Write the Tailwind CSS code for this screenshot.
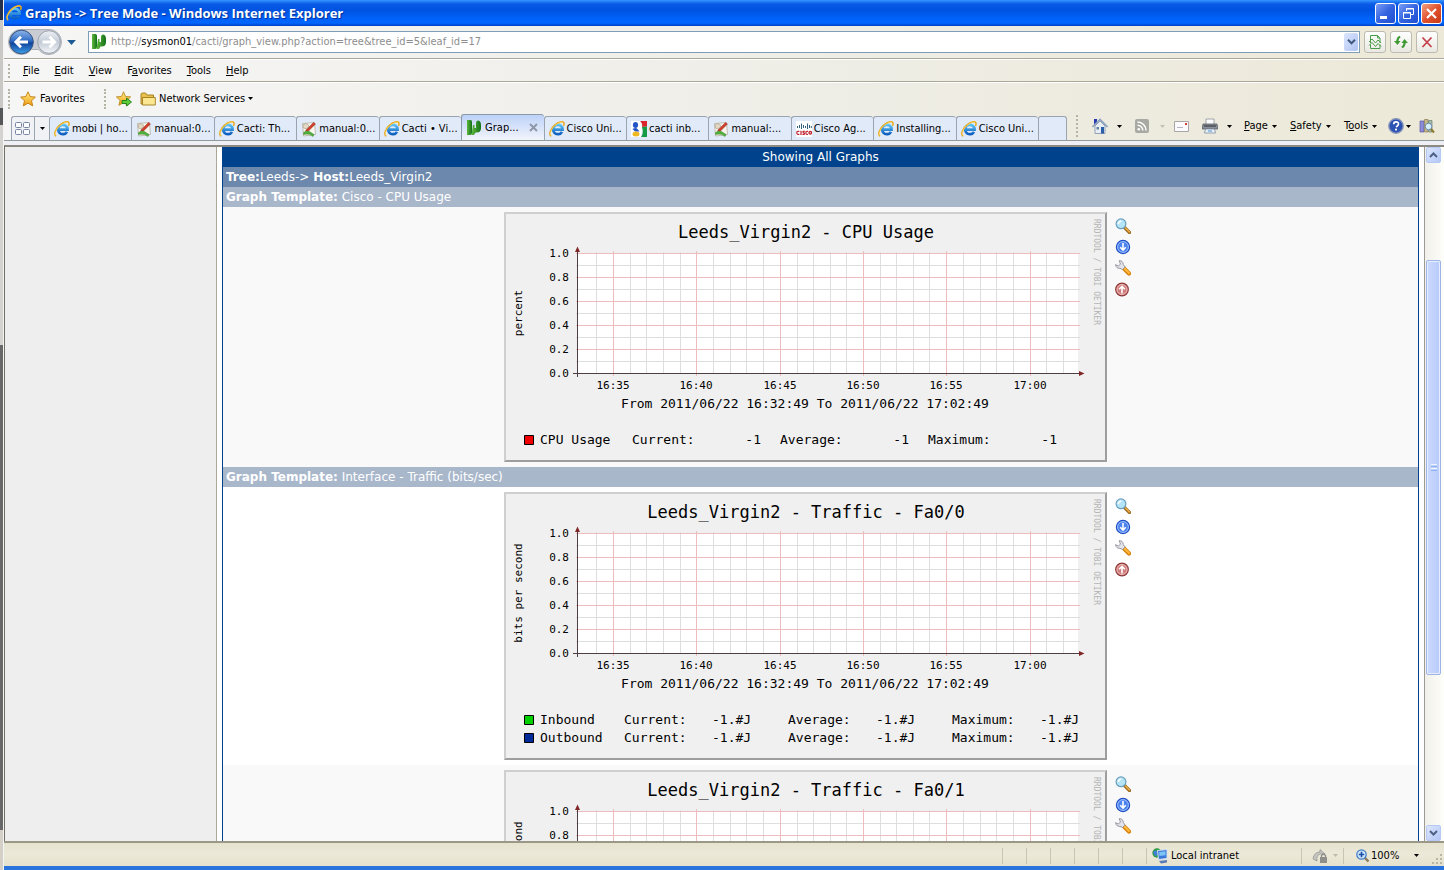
<!DOCTYPE html>
<html lang="en">
<head>
<meta charset="utf-8">
<title>Graphs -&gt; Tree Mode</title>
<script src="https://cdn.jsdelivr.net/npm/@tailwindcss/browser@4"></script>
</head>
<body class="flex h-screen overflow-hidden bg-white font-['DejaVu_Sans_Condensed','Noto_Sans',sans-serif] text-[11px] leading-4 text-black">

<!-- shared icons and plot grid -->
<svg class="absolute size-0" aria-hidden="true">
  <defs>
    <linearGradient id="blueBall" x1="0" y1="0" x2="0" y2="1"><stop offset="0" stop-color="#8fb6ea"/><stop offset=".45" stop-color="#2f6cc4"/><stop offset=".55" stop-color="#0f459c"/><stop offset="1" stop-color="#3fa0ea"/></linearGradient>
    <linearGradient id="greyBall" x1="0" y1="0" x2="0" y2="1"><stop offset="0" stop-color="#eef1f5"/><stop offset=".5" stop-color="#c3cbd6"/><stop offset="1" stop-color="#f4f7fa"/></linearGradient>
    <linearGradient id="ieBlue" x1="0" y1="0" x2="0" y2="1"><stop offset="0" stop-color="#5cc3f5"/><stop offset="1" stop-color="#0f5fc0"/></linearGradient>
    <linearGradient id="gold" x1="0" y1="0" x2="0" y2="1"><stop offset="0" stop-color="#fff08a"/><stop offset="1" stop-color="#f09a10"/></linearGradient>
    <linearGradient id="leaf" x1="0" y1="0" x2="1" y2="0"><stop offset="0" stop-color="#5fb83c"/><stop offset="1" stop-color="#14701a"/></linearGradient>
    <symbol id="ie" viewBox="0 0 16 16">
      <path d="M13 10.800A4.700 4.700 0 1 1 13.600 8.600H5.200" fill="none" stroke="url(#ieBlue)" stroke-width="2.700"/>
      <path d="M2.200 15.200C-.8 13.800 1.600 7.200 6 3.800 9.600.8 13.800-.2 14.800 1.600c.5 1 .2 2.200-.3 3.200" fill="none" stroke="#e9a91c" stroke-width="1.500"/>
      <path d="M2 14.600C.4 12.600 2.400 7.600 6 4.400 9 1.800 12.400.6 14 1.300" fill="none" stroke="#fbe07a" stroke-width=".6"/>
    </symbol>
    <symbol id="cactus" viewBox="0 0 16 16">
      <path d="M1 0h3.500Q6 0 6 2v11q0 2-2 2H1z" fill="url(#leaf)"/>
      <path d="M7 5h1.500v3H10V3.500Q10 .5 12.300.5 15 1 15 5v3q0 4.500-4.500 4.500H9.500L8 15H5.500z" fill="url(#leaf)"/>
    </symbol>
    <symbol id="manual" viewBox="0 0 16 16">
      <path d="M1.500 2.500l12-1 1 12-12 1.500z" fill="#f7f5ee" stroke="#b5b1a2" stroke-width=".8"/>
      <path d="M2 4q2-2 4.500-1L8 5 5 8 2.500 7z" fill="#e3d8c4" stroke="#a59a88" stroke-width=".6"/>
      <path d="M5 9L12.500 1.500l2 1.500-7 7-3 .3z" fill="#cf3f2c" stroke="#8a2115" stroke-width=".4"/>
      <path d="M2.500 11.500q3-2.500 6-1l4.500 3-1 2q-4-3.500-9.500-2z" fill="#4faf3a" stroke="#2f7d22" stroke-width=".4"/>
    </symbol>
    <symbol id="google" viewBox="0 0 16 16">
      <path d="M9 0h7v5.500l-5 .5q1-3-2-6z" fill="#d8262c"/><path d="M11 6l5-.5V16h-6q3-4 1-10z" fill="#139b45"/>
      <path d="M0 0h9q2 3 2 6t-1 10H0z" fill="#fff"/>
      <ellipse cx="4.500" cy="4" rx="2.600" ry="3" fill="#2457c5"/><path d="M1.500 8q3.500-2 5 0l2 2.500H4z" fill="#2457c5"/><ellipse cx="5" cy="13" rx="3.500" ry="2.500" fill="#efb720"/>
    </symbol>
    <symbol id="cisco" viewBox="0 0 16 16">
      <path fill="#fff" d="M0 0h16v16H0z"/>
      <path d="M1.500 5v2M3.500 4v3M5.500 2.500V8M7.500 4v3M9.500 5v2M11.500 2.500V8M13.500 4v3M15.300 5v2" stroke="#34607c" stroke-width="1"/>
      <g fill="none" stroke="#c22a35" stroke-width="1.300"><path d="M3.400 10.300H1.800q-1 0-1 1.500t1 1.500h1.600M5 9.700V14M8.800 10.300H7.200q-.6 1 .4 1.400 1.200.4.600 1.600H6.400M12 10.300h-1.200q-1 0-1 1.500t1 1.500H12"/><circle cx="14.200" cy="11.800" r="1.300"/></g>
    </symbol>
    <symbol id="star" viewBox="0 0 16 16"><path d="M8 .8l2.200 4.800 5.200.5-3.900 3.600 1.200 5.200L8 12.200l-4.700 2.700 1.200-5.200L.6 6.100l5.200-.5z" fill="url(#gold)" stroke="#c27a10" stroke-width=".9"/></symbol>
    <symbol id="staradd" viewBox="0 0 16 16"><path d="M7.500.8l2 4.600 5.200.5-3.900 3.400 1.200 5-4.500-2.600-4.600 2.600 1.200-5L.4 5.900l5.200-.5z" fill="url(#gold)" stroke="#b98a20" stroke-width=".9"/><path d="M6 9.500h4.500V7l5 4-5 4v-2.500H6z" fill="#5ccc3c" stroke="#1e7d16" stroke-width=".9"/></symbol>
    <symbol id="folder" viewBox="0 0 16 16"><path d="M1 13V3.500Q1 2 2.500 2h3L7 4h6.500v9z" fill="#e8c04c" stroke="#a07a18" stroke-width=".9"/><path d="M2.500 14V6.500h12.800V14z" fill="#fbe791" stroke="#a07a18" stroke-width=".9"/></symbol>
    <symbol id="down" viewBox="0 0 7 4"><path d="M0 0h7L3.500 4z"/></symbol>
    <symbol id="zoomin" viewBox="0 0 16 16"><path d="M9.500 9.500l5 5" stroke="#9a6a20" stroke-width="3.200" stroke-linecap="round"/><path d="M10.500 10l4 4" stroke="#f3b24a" stroke-width="1.300" stroke-linecap="round"/><circle cx="6" cy="5.800" r="4.900" fill="#b5e4f7" stroke="#6a9fbd" stroke-width="1.200"/><path d="M3.200 6q.3-2.500 3-3" fill="none" stroke="#fff" stroke-width="1.500"/></symbol>
    <symbol id="balldown" viewBox="0 0 16 16"><circle cx="8" cy="8" r="6.600" fill="#4c82ee" stroke="#1f4fc4" stroke-width="1.200"/><circle cx="8" cy="8" r="5.400" fill="none" stroke="#a9c6fb" stroke-width=".9"/><path d="M8 4v7M5.200 8.300L8 11.100l2.800-2.800" fill="none" stroke="#fff" stroke-width="1.600"/></symbol>
    <symbol id="ballup" viewBox="0 0 16 16"><circle cx="7" cy="8.500" r="6.300" fill="#cf7d7d" stroke="#8f3636" stroke-width="1.200"/><circle cx="7" cy="8.500" r="5" fill="none" stroke="#efc4c4" stroke-width=".9"/><path d="M7 12.500v-7M4.100 8.300L7 5.400l2.900 2.900" fill="none" stroke="#fff" stroke-width="1.600"/></symbol>
    <symbol id="wrench" viewBox="0 0 16 16"><path d="M9 8.500l5 5" stroke="#d98410" stroke-width="4.400" stroke-linecap="round"/><path d="M9.500 8.500l4.500 4.500" stroke="#ffb83a" stroke-width="2" stroke-linecap="round"/><path d="M4.200.7Q8 .5 8.300 4.500L10 7 7.500 9.500 5 8.300Q1 8.500.6 4.600L3.200 6l2.300-1.800z" fill="#e4e4ec" stroke="#8d8d99" stroke-width=".9"/></symbol>
    <symbol id="plot" viewBox="0 0 603 250">
      <path fill="#fff" d="M73 41h501v120H73z"/>
      <g fill="none">
        <path stroke="#dedede" d="M92.500 40v122M126.500 40v122M142.500 40v122M159.500 40v122M176.500 40v122M209.500 40v122M226.500 40v122M242.500 40v122M259.500 40v122M293.500 40v122M309.500 40v122M326.500 40v122M342.500 40v122M376.500 40v122M392.500 40v122M409.500 40v122M425.500 40v122M459.500 40v122M476.500 40v122M492.500 40v122M509.500 40v122M542.500 40v122M559.500 40v122M72 53.500h504M72 77.500h504M72 101.500h504M72 125.500h504M72 149.500h504"/>
        <path stroke="#eebcbf" d="M109.500 39v125M192.500 39v125M276.500 39v125M359.500 39v125M442.500 39v125M526.500 39v125M72 41.500h504M72 65.500h504M72 89.500h504M72 113.500h504M72 137.500h504"/>
        <path stroke="#4d3f42" d="M73.500 39v126M69 161.500h507"/>
      </g>
      <path fill="#7f2626" d="M71 40l2.500-5.500L76 40zM575 159l5.500 2.500-5.500 2.500z"/>
      <g class="font-['DejaVu_Sans_Mono',monospace] text-[11px]" text-anchor="end">
        <text x="65" y="45">1.0</text><text x="65" y="69">0.8</text><text x="65" y="93">0.6</text><text x="65" y="117">0.4</text><text x="65" y="141">0.2</text><text x="65" y="165">0.0</text>
      </g>
      <g class="font-['DejaVu_Sans_Mono',monospace] text-[11px]" text-anchor="middle">
        <text x="109" y="177">16:35</text><text x="192" y="177">16:40</text><text x="276" y="177">16:45</text><text x="359" y="177">16:50</text><text x="442" y="177">16:55</text><text x="526" y="177">17:00</text>
      </g>
      <text class="font-['DejaVu_Sans_Mono',monospace] text-[13px]" text-anchor="middle" x="301" y="196">From 2011/06/22 16:32:49 To 2011/06/22 17:02:49</text>
      <text class="font-['DejaVu_Sans_Mono',monospace] text-[8px]" fill="#b4b4b4" transform="translate(590 7) rotate(90)">RRDTOOL / TOBI OETIKER</text>
    </symbol>
  </defs>
</svg>

<!-- sliver of the window behind -->
<div class="flex w-1 shrink-0 flex-col border-r border-[#f4f4f4] bg-[#c9c8c4]">
  <div class="h-5 bg-[#26314c]"></div><div class="h-[88px]"></div><div class="h-[17px] bg-[#55575a]"></div><div class="h-[220px] bg-[#d4d3cf]"></div><div class="flex-1 bg-[#686868]"></div><div class="h-10 bg-[#d4d0c8]"></div>
</div>

<div class="flex min-w-0 flex-1 flex-col">
  <!-- title bar -->
  <header class="flex h-[26px] shrink-0 items-center bg-[linear-gradient(#3c96ff_0px,#2a86fa_1px,#0a5be6_4px,#0053e1_10px,#0062fb_19px,#0066ff_23px,#0040c4_26px)] pl-0.5 pr-0.5">
    <svg class="size-4 shrink-0"><use href="#ie"/></svg>
    <h1 class="ml-[3px] flex-1 truncate font-['Open_Sans',sans-serif] text-[13px] font-bold text-white [text-shadow:1px_1px_1px_#00309a]">Graphs -&gt; Tree Mode - Windows Internet Explorer</h1>
    <div class="flex gap-0.5">
      <button aria-label="Minimize" class="size-[21px] rounded-[3px] border border-white bg-linear-to-br from-[#7a9df5] via-[#3463e0] to-[#1f4fd0]"><svg viewBox="0 0 19 19"><path fill="#fff" d="M4 12h7v3H4z"/></svg></button>
      <button aria-label="Restore" class="size-[21px] rounded-[3px] border border-white bg-linear-to-br from-[#7a9df5] via-[#3463e0] to-[#1f4fd0]"><svg viewBox="0 0 19 19" fill="none" stroke="#fff"><path d="M7.500 7V4.500h7v6H12M7 5h8"/><path d="M4.500 8.500h7v6h-7zM4 9h8"/></svg></button>
      <button aria-label="Close" class="size-[21px] rounded-[3px] border border-white bg-linear-to-br from-[#f0a080] via-[#e0502c] to-[#c83a14]"><svg viewBox="0 0 19 19"><path d="M5 5l9 9M14 5l-9 9" stroke="#fff" stroke-width="2.200"/></svg></button>
    </div>
  </header>

  <div class="shrink-0 bg-linear-to-r from-[#f6f6f6] via-[#efeee8] to-[#ece9d8]">
    <!-- address row -->
    <div class="flex h-[33px] items-center border-b border-[#aca899] pr-1.5">
      <button aria-label="Back and forward" class="ml-1 h-7 w-[54px]"><svg viewBox="0 0 54 28" class="h-7 w-[54px]">
        <path d="M13 1.500h28a12.500 12.500 0 0 1 0 25q-7 0-10-5h-8q-3 5-10 5a12.500 12.500 0 0 1 0-25z" fill="#c9cdd3" stroke="#aeb2b8"/>
        <circle cx="13.500" cy="14" r="11.800" fill="url(#blueBall)" stroke="#35507e"/><path d="M20 14H8.500M13 8.800L7.800 14l5.200 5.200" fill="none" stroke="#fff" stroke-width="2.800"/>
        <circle cx="41" cy="14" r="11.300" fill="url(#greyBall)" stroke="#9aa2ad"/><path d="M34.500 14H46M41.500 8.800l5.200 5.200-5.200 5.200" fill="none" stroke="#fff" stroke-width="2.800"/></svg></button>
      <button aria-label="Recent pages" class="ml-[5px] w-[9px]"><svg class="h-[5px] w-[9px] fill-[#1d5a94]"><use href="#down"/></svg></button>
      <div class="ml-3 flex h-[22px] min-w-0 flex-1 items-center border border-[#7f9db9] bg-white pl-0.5 pr-px">
        <svg class="size-4 shrink-0"><use href="#cactus"/></svg>
        <div class="ml-1 min-w-0 flex-1 truncate text-[#8e8e8e]" role="textbox" aria-label="Address" contenteditable="true">http://<span class="text-black">sysmon01</span>/cacti/graph_view.php?action=tree&amp;tree_id=5&amp;leaf_id=17</div>
        <button aria-label="Show addresses" class="flex h-[18px] w-3.5 items-center justify-center rounded-[2px] bg-linear-to-br from-[#dbe5fd] to-[#afc3f2]"><svg viewBox="0 0 9 6" class="h-1.5 w-[9px]"><path d="M1 .8l3.500 3.500L8 .8" fill="none" stroke="#40587e" stroke-width="2"/></svg></button>
      </div>
      <div class="ml-1 flex gap-1">
        <button aria-label="Compatibility view" class="size-[22px] rounded-[3px] border border-[#bdbab0] bg-linear-to-b from-white to-[#e9e8e2]"><svg viewBox="0 0 20 20" fill="none" stroke="#4a9c4a"><path d="M5.500 11V3.500h7l2.500 2.500v5M12.500 3.500V6H15M5.500 12.500v4H15v-4"/><path d="M4 10l3-3 3.500 4L13 8l3 3M4 13.500l3-3 3.500 4 2.500-3 3 3"/></svg></button>
        <button aria-label="Refresh" class="size-[22px] rounded-[3px] border border-[#bdbab0] bg-linear-to-b from-white to-[#e9e8e2]"><svg viewBox="0 0 20 20" fill="#3f9a35"><path d="M9 4Q6 4 5.200 9H3l3.500 4 3-4H7.500Q7.500 6 9.500 5.500zM11 16q3 0 3.800-5H17l-3.500-4-3 4h2q0 3-2 3.500z"/></svg></button>
        <button aria-label="Stop" class="size-[22px] rounded-[3px] border border-[#bdbab0] bg-linear-to-b from-white to-[#e9e8e2]"><svg viewBox="0 0 20 20"><path d="M5.500 5.500l9 9.500M14.500 5.500l-9 9.500" stroke="#c5424c" stroke-width="1.800"/></svg></button>
      </div>
    </div>
    <!-- menu -->
    <nav class="flex h-[23px] items-center gap-[15px] border-b border-t border-b-[#aca899] border-t-white pl-1">
      <span class="h-3.5 border-l-2 border-dotted border-[#b5b2a6]"></span>
      <button class="-ml-0.5"><u>F</u>ile</button><button><u>E</u>dit</button><button><u>V</u>iew</button><button>F<u>a</u>vorites</button><button><u>T</u>ools</button><button><u>H</u>elp</button>
    </nav>
    <!-- favorites -->
    <div class="flex h-8 items-center border-t border-white pl-1">
      <span class="h-5 border-l-2 border-dotted border-[#b5b2a6]"></span>
      <button class="ml-2.5 flex w-[84px] items-center gap-1"><svg class="size-4"><use href="#star"/></svg>Favorites</button>
      <span class="h-5 border-l-2 border-dotted border-[#b5b2a6]"></span>
      <button aria-label="Add to favorites" class="ml-2.5"><svg class="size-4"><use href="#staradd"/></svg></button>
      <button class="ml-2 flex items-center gap-[3px]"><svg class="size-4"><use href="#folder"/></svg>Network Services<svg class="h-[3px] w-[5px]"><use href="#down"/></svg></button>
    </div>
    <!-- tabs and command bar -->
    <div class="flex h-[27px] items-end border-b border-[#919b9c] pl-[7px]">
      <div class="flex h-6 w-[38px] shrink-0 rounded-tl-[3px] border-l border-t border-[#9aa4b0] bg-[#f0f2f6]">
        <button aria-label="Quick tabs" class="flex w-[23px] items-center justify-center border-r border-[#9aa4b0]"><svg viewBox="0 0 16 15" class="h-[15px] w-4" fill="#fbfcff" stroke="#7883a0"><rect x=".5" y="1.500" width="6" height="5" rx="1"/><rect x="8.500" y="1.500" width="6" height="5" rx="1"/><rect x=".5" y="8.500" width="6" height="5" rx="1"/><rect x="8.500" y="8.500" width="6" height="5" rx="1"/></svg></button>
        <button aria-label="Tab list" class="flex flex-1 items-center justify-center"><svg class="h-[3px] w-[5px]"><use href="#down"/></svg></button>
      </div>
      <div class="flex min-w-0 flex-1 items-end">
        <button class="flex h-6 w-0 min-w-0 grow items-center gap-0.5 rounded-t-[3px] border-l border-t border-[#9aa4b0] bg-[#e1eaf8] pl-1 whitespace-nowrap"><svg class="size-4 shrink-0"><use href="#ie"/></svg>mobi | ho...</button>
        <button class="flex h-6 w-0 min-w-0 grow items-center gap-0.5 rounded-t-[3px] border-l border-t border-[#9aa4b0] bg-[#e1eaf8] pl-1 whitespace-nowrap"><svg class="size-4 shrink-0"><use href="#manual"/></svg>manual:0...</button>
        <button class="flex h-6 w-0 min-w-0 grow items-center gap-0.5 rounded-t-[3px] border-l border-t border-[#9aa4b0] bg-[#e1eaf8] pl-1 whitespace-nowrap"><svg class="size-4 shrink-0"><use href="#ie"/></svg>Cacti: Th...</button>
        <button class="flex h-6 w-0 min-w-0 grow items-center gap-0.5 rounded-t-[3px] border-l border-t border-[#9aa4b0] bg-[#e1eaf8] pl-1 whitespace-nowrap"><svg class="size-4 shrink-0"><use href="#manual"/></svg>manual:0...</button>
        <button class="flex h-6 w-0 min-w-0 grow items-center gap-0.5 rounded-t-[3px] border-l border-t border-[#9aa4b0] bg-[#e1eaf8] pl-1 whitespace-nowrap"><svg class="size-4 shrink-0"><use href="#ie"/></svg>Cacti • Vi...</button>
        <div class="flex h-[26px] w-0 min-w-0 grow items-center gap-0.5 rounded-t-[3px] border-l border-t border-[#8d98a8] bg-linear-to-b from-[#bdd2f8] to-[#f2f4fb] pl-1 whitespace-nowrap"><svg class="size-4 shrink-0"><use href="#cactus"/></svg><button class="ml-px flex-1 text-left">Grap...</button><button aria-label="Close tab" class="mr-1.5"><svg viewBox="0 0 9 9" class="size-[9px]"><path d="M1 1l7 7M8 1L1 8" stroke="#8f98a8" stroke-width="2"/></svg></button></div>
        <button class="flex h-6 w-0 min-w-0 grow items-center gap-0.5 rounded-t-[3px] border-l border-t border-[#9aa4b0] bg-[#e1eaf8] pl-1 whitespace-nowrap"><svg class="size-4 shrink-0"><use href="#ie"/></svg>Cisco Uni...</button>
        <button class="flex h-6 w-0 min-w-0 grow items-center gap-0.5 rounded-t-[3px] border-l border-t border-[#9aa4b0] bg-[#e1eaf8] pl-1 whitespace-nowrap"><svg class="size-4 shrink-0"><use href="#google"/></svg>cacti inb...</button>
        <button class="flex h-6 w-0 min-w-0 grow items-center gap-0.5 rounded-t-[3px] border-l border-t border-[#9aa4b0] bg-[#e1eaf8] pl-1 whitespace-nowrap"><svg class="size-4 shrink-0"><use href="#manual"/></svg>manual:...</button>
        <button class="flex h-6 w-0 min-w-0 grow items-center gap-0.5 rounded-t-[3px] border-l border-t border-[#9aa4b0] bg-[#e1eaf8] pl-1 whitespace-nowrap"><svg class="size-4 shrink-0"><use href="#cisco"/></svg>Cisco Ag...</button>
        <button class="flex h-6 w-0 min-w-0 grow items-center gap-0.5 rounded-t-[3px] border-l border-t border-[#9aa4b0] bg-[#e1eaf8] pl-1 whitespace-nowrap"><svg class="size-4 shrink-0"><use href="#ie"/></svg>Installing...</button>
        <button class="flex h-6 w-0 min-w-0 grow items-center gap-0.5 rounded-t-[3px] border-l border-t border-[#9aa4b0] bg-[#e1eaf8] pl-1 whitespace-nowrap"><svg class="size-4 shrink-0"><use href="#ie"/></svg>Cisco Uni...</button>
        <button aria-label="New tab" class="h-6 w-[29px] shrink-0 rounded-t-[3px] border-x border-t border-[#9aa4b0] bg-[#e1eaf8]"></button>
      </div>
      <div class="mb-0.5 ml-[9px] flex h-6 shrink-0 items-center pr-[9px]">
        <span class="mr-3.5 h-[22px] border-l-2 border-dotted border-[#b5b2a6]"></span>
        <button aria-label="Home" class="flex w-[43px] items-center gap-[9px]"><svg viewBox="0 0 16 16" class="size-4"><path d="M2 1h3v5H2z" fill="#2838b0"/><path d="M3 8l5-5 5 5v7.500H3z" fill="#e8edf4" stroke="#7d8fa8" stroke-width=".8"/><path d="M.5 9L8 1.500 15.500 9" fill="none" stroke="#8ea3bd" stroke-width="1.600"/><path d="M9 9h3v6.500H9z" fill="#2c5ea8"/><path d="M4.500 9h2.500v2.500H4.500z" fill="#68839f"/></svg><svg class="h-[3px] w-[5px]"><use href="#down"/></svg></button>
        <button aria-label="Feeds" class="flex w-[39px] items-center gap-[11px]"><svg viewBox="0 0 14 14" class="size-3.5"><rect width="14" height="14" rx="2" fill="#a9a9a4"/><circle cx="3.800" cy="10.300" r="1.300" fill="#fff"/><path d="M2.500 6.200a5.300 5.300 0 0 1 5.300 5.300M2.500 3a8.500 8.500 0 0 1 8.500 8.500" fill="none" stroke="#fff" stroke-width="1.500"/></svg><svg class="h-[3px] w-[5px] fill-[#c4c1b4]"><use href="#down"/></svg></button>
        <button aria-label="Read mail" class="w-7"><svg viewBox="0 0 15 11" class="h-[11px] w-[15px]"><path d="M.5.5h14v10H.5z" fill="#fbfbfd" stroke="#a9a6a8"/><path d="M3 6.500h6" stroke="#b5b5c4"/><path d="M11 2h2v2h-2z" fill="#d03838"/></svg></button>
        <button aria-label="Print" class="flex w-[42px] items-center gap-[9px]"><svg viewBox="0 0 16 16" class="size-4"><path d="M4 1h8v6H4z" fill="#fdfdfd" stroke="#8a8f98" stroke-width=".8"/><path d="M1 6h14l.8 5H.2z" fill="#8c9098" stroke="#565b64" stroke-width=".8"/><path d="M2 8h12" stroke="#4a4f58" stroke-width="1.500"/><path d="M3.500 11h9l1 4h-11z" fill="#e8f0f8" stroke="#7f8ea0" stroke-width=".8"/><path d="M6 13h4" stroke="#4c93d4"/></svg><svg class="h-[3px] w-[5px]"><use href="#down"/></svg></button>
        <button class="flex w-[46px] items-center gap-1"><span><u>P</u>age</span><svg class="h-[3px] w-[5px]"><use href="#down"/></svg></button>
        <button class="flex w-[54px] items-center gap-1"><span><u>S</u>afety</span><svg class="h-[3px] w-[5px]"><use href="#down"/></svg></button>
        <button class="flex w-11 items-center gap-1"><span>T<u>o</u>ols</span><svg class="h-[3px] w-[5px]"><use href="#down"/></svg></button>
        <button aria-label="Help" class="flex w-[31px] items-center gap-0.5"><svg viewBox="0 0 16 16" class="size-4"><circle cx="8" cy="8" r="7.200" fill="#2c52b4" stroke="#8594b8" stroke-width="1.400"/><path d="M5.700 6.200q0-2.400 2.400-2.400t2.400 2.100Q10.500 7.300 8.100 9" fill="none" stroke="#fff" stroke-width="1.700"/><circle cx="8" cy="11.600" r="1.100" fill="#fff"/></svg><svg class="h-[3px] w-[5px]"><use href="#down"/></svg></button>
        <button aria-label="Research"><svg viewBox="0 0 16 16" class="size-4"><path d="M1 3h4v11H1z" fill="#8b8bd8" stroke="#5a5aa0" stroke-width=".7"/><path d="M5.500 1.500H9V14H5.500z" fill="#c9b98a" stroke="#8a7d55" stroke-width=".7"/><path d="M9.500 2.500H13V14H9.500z" fill="#a5b8a5" stroke="#6d806d" stroke-width=".7"/><circle cx="9.500" cy="8.500" r="3.300" fill="#d8eefa" stroke="#6b8fae"/><path d="M12 11l3 3.500" stroke="#8d7a2e" stroke-width="2"/></svg></button>
      </div>
    </div>
    <div class="h-1 bg-[#eff0f5]"></div>
  </div>

  <!-- page -->
  <main class="flex min-h-0 flex-1 border-l border-t-2 border-l-[#716f64] border-t-[#8c8a80] bg-white">
    <aside class="w-[212px] shrink-0 border-r border-[#aca899] bg-[#eeeeee]"></aside>
    <section class="ml-[5px] mr-[5px] min-w-0 flex-1 overflow-hidden border-x border-[#00438c] font-['DejaVu_Sans',sans-serif] text-[12px] leading-5 text-white">
      <h2 class="h-5 bg-[#00438c] text-center">Showing All Graphs</h2>
      <p class="h-5 bg-[#6d88ad] px-[3px]"><b>Tree:</b>Leeds-&gt; <b>Host:</b>Leeds_Virgin2</p>
      <h3 class="h-5 bg-[#a9b7cb] px-[3px]"><b>Graph Template:</b> Cisco - CPU Usage</h3>
      <article class="flex h-[260px] justify-center gap-2 bg-[#f9f9f9] pt-[5px]">
        <div class="h-[250px] w-[603px] border-2 border-b-[#9e9e9e] border-l-[#cfcfcf] border-r-[#9e9e9e] border-t-[#cfcfcf] bg-[#f0f0f0]">
          <svg viewBox="2 2 599 246" class="h-[246px] w-[599px] font-['DejaVu_Sans_Mono',monospace] text-[13px]" fill="#000">
            <use href="#plot" width="603" height="250"/>
            <text class="text-[17px]" text-anchor="middle" x="302" y="26">Leeds_Virgin2 - CPU Usage</text>
            <text class="text-[11px]" text-anchor="middle" transform="translate(18 101) rotate(-90)">percent</text>
            <path d="M20.500 223.500h9v9h-9z" fill="#f00000" stroke="#000"/>
            <text x="36" y="232">CPU Usage</text><text x="128" y="232">Current:</text><text x="257" y="232" text-anchor="end">-1</text><text x="276" y="232">Average:</text><text x="405" y="232" text-anchor="end">-1</text><text x="424" y="232">Maximum:</text><text x="553" y="232" text-anchor="end">-1</text>
          </svg>
        </div>
        <div class="flex w-[22px] flex-col gap-[5px] pt-1.5">
          <a href="#" aria-label="Zoom graph"><svg class="size-4"><use href="#zoomin"/></svg></a><a href="#" aria-label="CSV export"><svg class="size-4"><use href="#balldown"/></svg></a><a href="#" aria-label="Properties"><svg class="size-4"><use href="#wrench"/></svg></a><a href="#" aria-label="Page top"><svg class="size-4"><use href="#ballup"/></svg></a>
        </div>
      </article>
      <h3 class="h-5 bg-[#a9b7cb] px-[3px]"><b>Graph Template:</b> Interface - Traffic (bits/sec)</h3>
      <article class="flex h-[278px] justify-center gap-2 bg-white pt-[5px]">
        <div class="h-[268px] w-[603px] border-2 border-b-[#9e9e9e] border-l-[#cfcfcf] border-r-[#9e9e9e] border-t-[#cfcfcf] bg-[#f0f0f0]">
          <svg viewBox="2 2 599 264" class="h-[264px] w-[599px] font-['DejaVu_Sans_Mono',monospace] text-[13px]" fill="#000">
            <use href="#plot" width="603" height="250"/>
            <text class="text-[17px]" text-anchor="middle" x="302" y="26">Leeds_Virgin2 - Traffic - Fa0/0</text>
            <text class="text-[11px]" text-anchor="middle" transform="translate(18 101) rotate(-90)">bits per second</text>
            <path d="M20.500 223.500h9v9h-9z" fill="#00cf00" stroke="#000"/>
            <text x="36" y="232">Inbound</text><text x="120" y="232">Current:</text><text x="208" y="232">-1.#J</text><text x="284" y="232">Average:</text><text x="372" y="232">-1.#J</text><text x="448" y="232">Maximum:</text><text x="536" y="232">-1.#J</text>
            <path d="M20.500 241.500h9v9h-9z" fill="#002a97" stroke="#000"/>
            <text x="36" y="250">Outbound</text><text x="120" y="250">Current:</text><text x="208" y="250">-1.#J</text><text x="284" y="250">Average:</text><text x="372" y="250">-1.#J</text><text x="448" y="250">Maximum:</text><text x="536" y="250">-1.#J</text>
          </svg>
        </div>
        <div class="flex w-[22px] flex-col gap-[5px] pt-1.5">
          <a href="#" aria-label="Zoom graph"><svg class="size-4"><use href="#zoomin"/></svg></a><a href="#" aria-label="CSV export"><svg class="size-4"><use href="#balldown"/></svg></a><a href="#" aria-label="Properties"><svg class="size-4"><use href="#wrench"/></svg></a><a href="#" aria-label="Page top"><svg class="size-4"><use href="#ballup"/></svg></a>
        </div>
      </article>
      <article class="flex h-[278px] justify-center gap-2 bg-[#f9f9f9] pt-[5px]">
        <div class="h-[268px] w-[603px] border-2 border-b-[#9e9e9e] border-l-[#cfcfcf] border-r-[#9e9e9e] border-t-[#cfcfcf] bg-[#f0f0f0]">
          <svg viewBox="2 2 599 264" class="h-[264px] w-[599px] font-['DejaVu_Sans_Mono',monospace] text-[13px]" fill="#000">
            <use href="#plot" width="603" height="250"/>
            <text class="text-[17px]" text-anchor="middle" x="302" y="26">Leeds_Virgin2 - Traffic - Fa0/1</text>
            <text class="text-[11px]" text-anchor="middle" transform="translate(18 101) rotate(-90)">bits per second</text>
          </svg>
        </div>
        <div class="flex w-[22px] flex-col gap-[5px] pt-1.5">
          <a href="#" aria-label="Zoom graph"><svg class="size-4"><use href="#zoomin"/></svg></a><a href="#" aria-label="CSV export"><svg class="size-4"><use href="#balldown"/></svg></a><a href="#" aria-label="Properties"><svg class="size-4"><use href="#wrench"/></svg></a>
        </div>
      </article>
    </section>
    <!-- scrollbar -->
    <div class="flex w-5 shrink-0 flex-col items-center border-l border-[#9c9a92] bg-linear-to-r from-[#f1f0ea] to-[#fefefa] pr-0.5">
      <button aria-label="Scroll up" class="flex h-4 w-[15px] items-center justify-center rounded-[2px] border border-[#b6c8f4] bg-linear-to-br from-[#dbe5fd] to-[#b4c8f6]"><svg viewBox="0 0 9 6" class="h-1.5 w-[9px]"><path d="M1 5l3.500-3.500L8 5" fill="none" stroke="#4d6185" stroke-width="2"/></svg></button>
      <div class="grow-98"></div>
      <div class="flex w-[15px] grow-412 flex-col items-center justify-center gap-px rounded-[2px] border border-[#9cb4e6] bg-linear-to-r from-[#cbd9fd] to-[#b7cbfa] shadow-[inset_0_0_0_1px_#e6eeff]">
        <i class="h-px w-1.5 bg-[#eef4fe]"></i><i class="h-px w-1.5 bg-[#8cb0f8]"></i><i class="h-px w-1.5 bg-[#eef4fe]"></i><i class="h-px w-1.5 bg-[#8cb0f8]"></i>
      </div>
      <div class="grow-152"></div>
      <button aria-label="Scroll down" class="flex h-4 w-[15px] items-center justify-center rounded-[2px] border border-[#b6c8f4] bg-linear-to-br from-[#dbe5fd] to-[#b4c8f6]"><svg viewBox="0 0 9 6" class="h-1.5 w-[9px]"><path d="M1 1l3.500 3.500L8 1" fill="none" stroke="#4d6185" stroke-width="2"/></svg></button>
    </div>
  </main>

  <!-- status bar -->
  <footer class="flex h-[25px] shrink-0 items-center justify-end border-t-2 border-[#9b9888] bg-linear-to-b from-[#e6e3d0] via-[#ece9d8] to-[#e4e1ce] pt-0.5">
    <div class="flex h-4">
      <i class="w-6 border-l border-[#c8c5b2]"></i><i class="w-6 border-l border-[#c8c5b2]"></i><i class="w-6 border-l border-[#c8c5b2]"></i><i class="w-6 border-l border-[#c8c5b2]"></i><i class="w-6 border-l border-[#c8c5b2]"></i><i class="w-6 border-l border-[#c8c5b2]"></i>
    </div>
    <div class="flex h-4 w-[155px] items-center gap-[3px] border-l border-[#c8c5b2] pl-[5px]">
      <svg viewBox="0 0 16 16" class="size-4"><circle cx="5" cy="5" r="4.700" fill="#2f9a4a"/><path d="M1 4q3-3 4.500 0T3 8z" fill="#3d7fd8"/><path d="M5.500 2.500l9.500-1v9l-8.500 1z" fill="#3b78d8" stroke="#d5e2f2"/><path d="M7 4l6.500-.8v4L7.500 8z" fill="#7fc4f6"/><path d="M7 13l8-1v2.500l-6 1z" fill="#5a79b8"/></svg>Local intranet
    </div>
    <button aria-label="Protected mode" class="flex h-4 w-[42px] items-center gap-[5px] border-l border-[#c8c5b2] pl-2.5">
      <svg viewBox="0 0 16 16" class="size-4"><path d="M1 11Q2 4 8 4V1.500L13 6H8Q4 7 5 13z" fill="#c6c6c2" stroke="#95958f" stroke-width=".8"/><path d="M8 9h7v6H8z" fill="#8e8e8a"/><path d="M9.500 9V7.500q2-2.500 4 0V9" fill="none" stroke="#8e8e8a" stroke-width="1.300"/></svg><svg class="h-[3px] w-[5px] fill-[#bdbaa8]"><use href="#down"/></svg>
    </button>
    <button class="flex h-4 w-[89px] items-center border-l border-[#c8c5b2] pl-3">
      <svg viewBox="0 0 14 14" class="mr-px size-3.5"><path d="M8.500 8.500l4 4" stroke="#8a7a5a" stroke-width="2.400"/><circle cx="5.500" cy="5.500" r="4.700" fill="#cfe6fa" stroke="#3f7ac4" stroke-width="1.200"/><path d="M5.500 2.800v5.400M2.800 5.500h5.400" stroke="#1c4fa8" stroke-width="1.600"/></svg>100%<svg class="ml-[15px] h-[3px] w-[5px]"><use href="#down"/></svg>
    </button>
    <svg viewBox="0 0 12 12" class="h-3 w-3 self-end fill-[#b8b5a2]"><path d="M8 0h2v2H8zM4 4h2v2H4zM8 4h2v2H8zM0 8h2v2H0zM4 8h2v2H4zM8 8h2v2H8z"/></svg>
  </footer>
  <div class="h-1 shrink-0 bg-[#2a72dc]"></div>
</div>
</body>
</html>
